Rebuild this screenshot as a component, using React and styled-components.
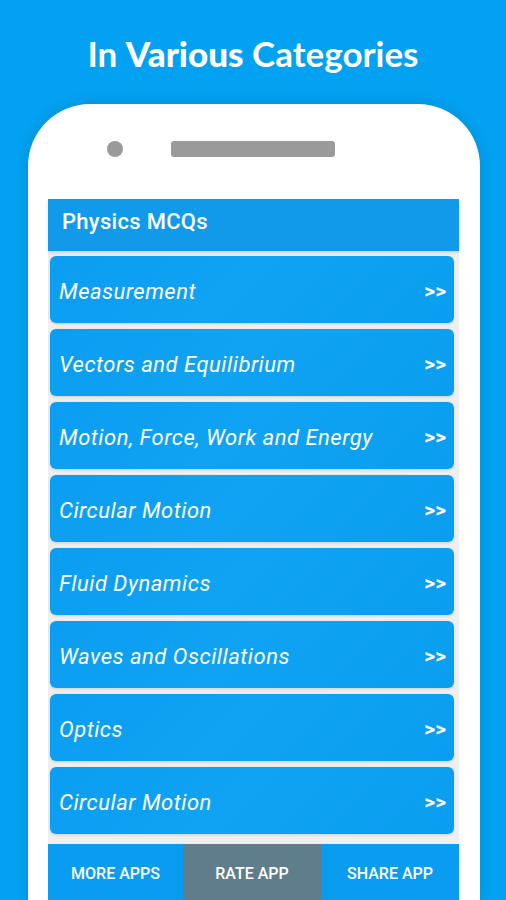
import styled, { createGlobalStyle } from "styled-components";

const GlobalStyle = createGlobalStyle`
  html, body {
    margin: 0;
    padding: 0;
    background: #03a1f1;
  }
  body {
    font-family: Roboto, "Liberation Sans", sans-serif;
    overflow: hidden;
  }
`

const topics = [
    "Measurement",
    "Vectors and Equilibrium",
    "Motion, Force, Work and Energy",
    "Circular Motion",
    "Fluid Dynamics",
    "Waves and Oscillations",
    "Optics",
    "Circular Motion"
]

const App = () => {
    return (
        <>
            <GlobalStyle />
            <Page>
                <Title>In <strong>Various</strong> Categories</Title>
                <Phone>
                    <PhoneTop>
                        <Camera />
                        <Speaker />
                    </PhoneTop>
                    <Screen>
                        <Header>Physics MCQs</Header>
                        <List>
                            {
                                topics.map((topic, index) => {
                                    return (
                                        <Card key={index}>
                                            <span>{topic}</span>
                                            <Arrows>&gt;&gt;</Arrows>
                                        </Card>
                                    )
                                })
                            }
                        </List>
                        <BottomBar>
                            <BarButton>MORE APPS</BarButton>
                            <BarButton active>RATE APP</BarButton>
                            <BarButton>SHARE APP</BarButton>
                        </BottomBar>
                    </Screen>
                </Phone>
            </Page>
        </>
    )
}

const Page = styled.div`
    width: 506px;
    height: 900px;
    overflow: hidden;
    display: flex;
    flex-direction: column;
    background: #03a1f1;
`
const Title = styled.h1`
    margin: 0;
    height: 106px;
    padding-top: 33px;
    box-sizing: border-box;
    text-align: center;
    color: #fff;
    font-family: Lato, "Open Sans", sans-serif;
    font-weight: 700;
    font-size: 35px;
    line-height: 40px;
    strong{
        font-weight: 900;
    }
`
const Phone = styled.div`
    margin: 0 26px 0 28px;
    flex: 1;
    background: #fff;
    border-radius: 62px 62px 0 0;
    display: flex;
    flex-direction: column;
    box-shadow: 0 0 14px rgba(0,0,0,0.12);
`
const PhoneTop = styled.div`
    height: 95px;
    display: flex;
    align-items: center;
    padding-left: 79px;
    gap: 48px;
    padding-bottom: 6px;
    box-sizing: border-box;
`
const Camera = styled.div`
    width: 16px;
    height: 16px;
    border-radius: 50%;
    background: #9a9a9a;
`
const Speaker = styled.div`
    width: 164px;
    height: 16px;
    border-radius: 3px;
    background: #9a9a9a;
`
const Screen = styled.div`
    margin: 0 21px 0 20px;
    flex: 1;
    background: #efefef;
    display: flex;
    flex-direction: column;
`
const Header = styled.div`
    height: 52px;
    background: #1199ea;
    color: #fff;
    font-size: 22px;
    font-weight: 500;
    letter-spacing: 0.3px;
    padding-left: 14px;
    display: flex;
    align-items: center;
    padding-bottom: 8px;
    box-sizing: border-box;
    box-shadow: 0 2px 3px rgba(0,0,0,0.12);
`
const List = styled.div`
    display: flex;
    flex-direction: column;
    gap: 6px;
    padding: 5px 5px 0 2px;
`
const Card = styled.div`
    height: 67px;
    border-radius: 6px;
    background: linear-gradient(135deg, #0a9df1 0%, #10a3f3 45%, #0a9ef0 100%);
    box-shadow: 0 1px 3px rgba(0,0,0,0.14);
    color: #fff;
    display: flex;
    align-items: center;
    justify-content: space-between;
    padding: 3px 8px 0 9px;
    box-sizing: border-box;
    font-size: 22px;
    letter-spacing: 0.5px;
    font-style: italic;
`
const Arrows = styled.span`
    font-style: normal;
    font-weight: 700;
    font-size: 21px;
    letter-spacing: 0;
`
const BottomBar = styled.div`
    margin-top: 10px;
    height: 56px;
    display: grid;
    grid-template-columns: 135px 138px 1fr;
`
const BarButton = styled.div`
    background: ${props => props.active ? "#607d8b" : "#0a9cf0"};
    color: #fff;
    font-size: 16px;
    font-weight: 500;
    display: flex;
    align-items: center;
    justify-content: center;
    padding-top: 2px;
`

export default App
